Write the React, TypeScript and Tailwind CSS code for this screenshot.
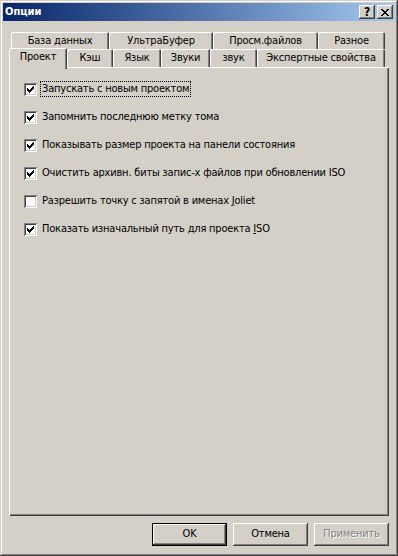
import React from 'react';

const raised = 'shadow-[inset_-1px_-1px_#404040,inset_1px_1px_#ffffff,inset_-2px_-2px_#808080,inset_2px_2px_#d4d0c8]';
const tabEdge = 'shadow-[inset_1px_1px_#ffffff,inset_-1px_0_#404040,inset_-2px_0_#808080] rounded-t-[2px]';

const backRow = [
  { label: 'База данных', w: 'w-[98px]' },
  { label: 'УльтраБуфер', w: 'w-[104px]' },
  { label: 'Просм.файлов', w: 'w-[105px]' },
  { label: 'Разное', w: 'w-[67px]' },
];

const frontRow = [
  { label: 'Кэш', w: 'w-[46px]' },
  { label: 'Язык', w: 'w-[48px]' },
  { label: 'Звуки', w: 'w-[49px]' },
  { label: 'звук', w: 'w-[47px]' },
  { label: 'Экспертные свойства', w: 'w-[128px]' },
];

function CheckMark() {
  return (
    <svg width="13" height="13" viewBox="0 0 13 13" className="block">
      <path
        fill="#000"
        d="M9 3h1v1h-1z M8 4h2v1h-2z M3 5h1v1h-1z M7 5h3v1h-3z M3 6h2v1h-2z M6 6h3v1h-3z M3 7h5v1h-5z M4 8h3v1h-3z M5 9h1v1h-1z"
      />
    </svg>
  );
}

function CheckRow({ checked, focused, children }: { checked: boolean; focused?: boolean; children: React.ReactNode }) {
  return (
    <div className="flex items-center h-[28px]">
      <div className="w-[13px] h-[13px] bg-white shadow-[inset_1px_1px_#808080,inset_-1px_-1px_#ffffff,inset_2px_2px_#404040,inset_-2px_-2px_#d4d0c8]">
        {checked && <CheckMark />}
      </div>
      <span
        className={`ml-[3px] px-[1px] leading-[14px] border ${focused ? 'border-dotted border-black' : 'border-transparent'}`}
      >
        {children}
      </span>
    </div>
  );
}

function Button({ label, isDefault, disabled }: { label: string; isDefault?: boolean; disabled?: boolean }) {
  return (
    <div
      className={`w-[75px] h-[23px] flex items-center justify-center ${
        isDefault
          ? 'shadow-[inset_0_0_0_1px_#000000,inset_-2px_-2px_#404040,inset_2px_2px_#ffffff,inset_-3px_-3px_#808080]'
          : raised
      }`}
    >
      <span className={disabled ? 'text-[#808080] [text-shadow:1px_1px_0_#ffffff]' : 'text-black'}>{label}</span>
    </div>
  );
}

export default function App() {
  return (
    <div className="w-[398px] h-[556px] bg-[#d4d0c8] p-[3px] flex flex-col text-[11px] tracking-[-0.2px] text-black font-['DejaVu_Sans_Condensed','DejaVu_Sans',sans-serif] shadow-[inset_-1px_-1px_#404040,inset_1px_1px_#d4d0c8,inset_-2px_-2px_#808080,inset_2px_2px_#ffffff]">
      <div className="h-[18px] flex items-center pl-[2px] pr-[2px] bg-gradient-to-r from-[#0a246a] to-[#a6caf0]">
        <span className="flex-1 text-white font-bold text-[11px] tracking-normal">Опции</span>
        <div className={`w-[16px] h-[14px] bg-[#d4d0c8] flex items-center justify-center font-bold text-[12px] leading-none ${raised}`}>
          ?
        </div>
        <div className={`ml-[2px] w-[16px] h-[14px] bg-[#d4d0c8] flex items-center justify-center ${raised}`}>
          <svg width="8" height="7" viewBox="0 0 8 7">
            <path
              fill="#000"
              d="M0 0h2v1h-2z M6 0h2v1h-2z M1 1h2v1h-2z M5 1h2v1h-2z M2 2h4v1h-4z M3 3h2v1h-2z M2 4h4v1h-4z M1 5h2v1h-2z M5 5h2v1h-2z M0 6h2v1h-2z M6 6h2v1h-2z"
            />
          </svg>
        </div>
      </div>

      <div className="mt-[11px] mx-[6px] flex flex-col">
        <div className="flex h-[17px] ml-[2px]">
          {backRow.map(t => (
            <div key={t.label} className={`${t.w} flex items-center justify-center pt-[1px] ${tabEdge}`}>
              {t.label}
            </div>
          ))}
        </div>
        <div className="flex items-end h-[18px]">
          <div className={`relative z-10 w-[58px] h-[21px] -mb-[2px] bg-[#d4d0c8] flex items-center justify-center pb-[3px] ${tabEdge}`}>
            Проект
          </div>
          {frontRow.map(t => (
            <div key={t.label} className={`${t.w} h-[18px] flex items-center justify-center ${tabEdge}`}>
              {t.label}
            </div>
          ))}
        </div>
        <div className="h-[449px] pl-[15px] pt-[8px] shadow-[inset_1px_1px_#ffffff,inset_-1px_-1px_#404040,inset_-2px_-2px_#808080]">
          <CheckRow checked focused>Запускать с новым проектом</CheckRow>
          <CheckRow checked>Запомнить последнюю метку тома</CheckRow>
          <CheckRow checked>Показывать размер проекта на панели состояния</CheckRow>
          <CheckRow checked>Очистить архивн. биты запис-х файлов при обновлении ISO</CheckRow>
          <CheckRow checked={false}>
            Разрешить точку с запятой в именах <span className="underline">J</span>oliet
          </CheckRow>
          <CheckRow checked>
            Показать изначальный путь для проекта <span className="underline">I</span>SO
          </CheckRow>
        </div>
      </div>

      <div className="mt-[7px] mr-[6px] flex justify-end gap-[6px]">
        <Button label="OK" isDefault />
        <Button label="Отмена" />
        <Button label="Применить" disabled />
      </div>
    </div>
  );
}
